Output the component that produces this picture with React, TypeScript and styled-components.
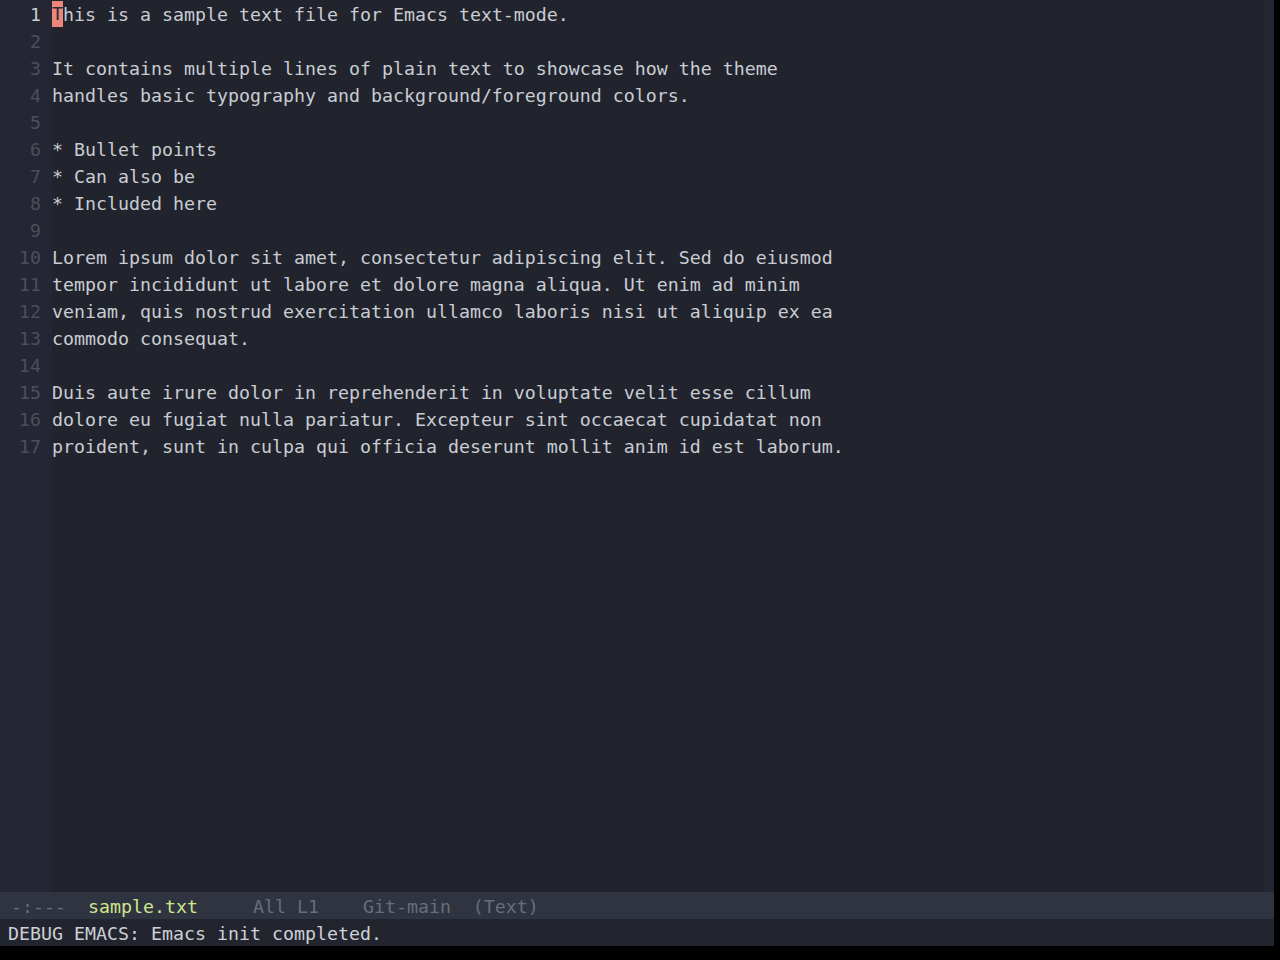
import styled, { createGlobalStyle } from "styled-components";

const GlobalStyle = createGlobalStyle`
  html, body {
    margin: 0;
    padding: 0;
    background: #000000;
  }
  * {
    box-sizing: border-box;
  }
`;

const lines: string[] = [
  "This is a sample text file for Emacs text-mode.",
  "",
  "It contains multiple lines of plain text to showcase how the theme",
  "handles basic typography and background/foreground colors.",
  "",
  "* Bullet points",
  "* Can also be",
  "* Included here",
  "",
  "Lorem ipsum dolor sit amet, consectetur adipiscing elit. Sed do eiusmod",
  "tempor incididunt ut labore et dolore magna aliqua. Ut enim ad minim",
  "veniam, quis nostrud exercitation ullamco laboris nisi ut aliquip ex ea",
  "commodo consequat.",
  "",
  "Duis aute irure dolor in reprehenderit in voluptate velit esse cillum",
  "dolore eu fugiat nulla pariatur. Excepteur sint occaecat cupidatat non",
  "proident, sunt in culpa qui officia deserunt mollit anim id est laborum.",
];

const Frame = styled.div`
  width: 1274px;
  height: 946px;
  display: flex;
  flex-direction: column;
  font-family: "DejaVu Sans Mono", "Liberation Mono", monospace;
  font-size: 18.27px;
  line-height: 27px;
  white-space: pre;
`;

const Window = styled.div`
  flex: 1;
  display: flex;
  background: #21242d;
  min-height: 0;
`;

const Gutter = styled.div`
  width: 52px;
  background: #242733;
  display: flex;
  flex-direction: column;
`;

const LineNumber = styled.div<{ $current?: boolean }>`
  height: 27px;
  padding-top: 1px;
  text-align: right;
  padding-right: 11px;
  color: ${(p) => (p.$current ? "#c9ccd3" : "#4a4f5c")};
`;

const Body = styled.div`
  flex: 1;
  display: flex;
  flex-direction: column;
  color: #c9ccd3;
`;

const Line = styled.div`
  height: 27px;
  padding-top: 1px;
`;

const Cursor = styled.span`
  display: inline-block;
  vertical-align: top;
  height: 26px;
  line-height: 26px;
  background: #ee8579;
  color: #2a2d36;
`;

const Fringe = styled.div`
  width: 9px;
  background: #242733;
`;

const ModeLine = styled.div`
  height: 27px;
  padding-top: 1px;
  background: #2f3440;
  color: #676e7c;
`;

const BufferName = styled.span`
  color: #d0e58a;
`;

const EchoArea = styled.div`
  height: 27px;
  padding-top: 1px;
  background: #22252e;
  color: #cdd0d6;
  padding-left: 8px;
`;

export default function App() {
  return (
    <>
      <GlobalStyle />
      <Frame>
        <Window>
          <Gutter>
            {lines.map((_, i) => (
              <LineNumber key={i} $current={i === 0}>
                {i + 1}
              </LineNumber>
            ))}
          </Gutter>
          <Body>
            {lines.map((text, i) =>
              i === 0 ? (
                <Line key={i}>
                  <Cursor>{text[0]}</Cursor>
                  {text.slice(1)}
                </Line>
              ) : (
                <Line key={i}>{text}</Line>
              )
            )}
          </Body>
          <Fringe />
        </Window>
        <ModeLine>
          {" -:---  "}
          <BufferName>sample.txt</BufferName>
          {"     All L1    Git-main  (Text)"}
        </ModeLine>
        <EchoArea>DEBUG EMACS: Emacs init completed.</EchoArea>
      </Frame>
    </>
  );
}
